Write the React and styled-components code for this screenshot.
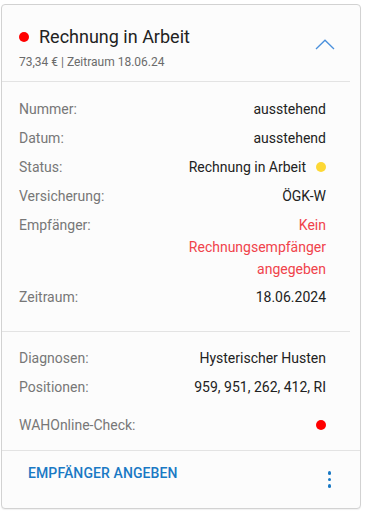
import React from "react";
import styled, { createGlobalStyle } from "styled-components";

const GlobalStyle = createGlobalStyle`
  *, *::before, *::after {
    box-sizing: border-box;
  }
  body {
    margin: 0;
    background: #ffffff;
    font-family: Roboto, "Liberation Sans", Arial, sans-serif;
  }
`;

const Page = styled.div`
  padding: 4px 5px 6px 1px;
`;

const Card = styled.div`
  width: 360px;
  border: 1px solid #d2d2d2;
  border-radius: 4px;
  background: #fcfcfc;
  box-shadow: 0 1px 1px rgba(0, 0, 0, 0.06);
  display: flex;
  flex-direction: column;
`;

const Header = styled.div`
  display: flex;
  align-items: flex-start;
  justify-content: space-between;
  padding: 19px 24px 0 17px;
  height: 77px;
  border-bottom: 1px solid #e3e3e3;
  margin-right: 10px;
`;

const TitleLine = styled.div`
  display: flex;
  align-items: center;
  gap: 10px;
`;

const Dot = styled.span`
  display: inline-block;
  width: ${({ size }) => size || 9}px;
  height: ${({ size }) => size || 9}px;
  border-radius: 50%;
  background: ${({ color }) => color};
  flex-shrink: 0;
`;

const Title = styled.div`
  font-size: 18px;
  line-height: 26px;
  color: #222222;
`;

const Subtitle = styled.div`
  font-size: 12px;
  line-height: 16px;
  color: #6b6b6b;
  margin-top: 4px;
`;

const Chevron = styled.svg`
  margin-top: 15px;
  margin-right: -9px;
`;

const Section = styled.div`
  padding: ${({ pad }) => pad};
  margin-right: 10px;
  border-bottom: ${({ last }) => (last ? "none" : "1px solid #e3e3e3")};
  display: flex;
  flex-direction: column;
`;

const Row = styled.div`
  display: flex;
  justify-content: space-between;
  align-items: ${({ center }) => (center ? "center" : "flex-start")};
  min-height: ${({ h }) => h || 29}px;
  padding-right: 24px;
`;

const Label = styled.div`
  font-size: 14px;
  line-height: 22px;
  color: #777777;
`;

const Value = styled.div`
  font-size: 14px;
  line-height: 22px;
  color: ${({ warn }) => (warn ? "#f0434b" : "#222222")};
  text-align: right;
  display: flex;
  align-items: center;
  gap: 10px;
  max-width: ${({ wide }) => (wide ? "none" : "150px")};
  justify-content: flex-end;
`;

const Footer = styled.div`
  display: flex;
  justify-content: space-between;
  align-items: flex-start;
  border-top: 1px solid #e3e3e3;
  height: 58px;
  padding: 13px 29px 0 26px;
`;

const ActionButton = styled.button`
  border: none;
  background: none;
  padding: 0;
  font-family: inherit;
  font-size: 14px;
  font-weight: 500;
  letter-spacing: 0.1px;
  color: #1a79c4;
  line-height: 18px;
  cursor: pointer;
`;

const Kebab = styled.div`
  display: flex;
  flex-direction: column;
  gap: 3px;
  margin-top: 7px;
`;

const KebabDot = styled.span`
  width: 3.5px;
  height: 3.5px;
  border-radius: 50%;
  background: #1a79c4;
`;

export default function App() {
  return (
    <Page>
      <GlobalStyle />
      <Card>
        <Header>
          <div>
            <TitleLine>
              <Dot color="#ff0000" size={10} />
              <Title>Rechnung in Arbeit</Title>
            </TitleLine>
            <Subtitle>73,34 € | Zeitraum 18.06.24</Subtitle>
          </div>
          <Chevron width="20" height="11" viewBox="0 0 20 11">
            <path d="M1 10 L10 1.2 L19 10" fill="none" stroke="#4a90dc" strokeWidth="1.3" />
          </Chevron>
        </Header>

        <Section pad="16px 0 23px 17px">
          <Row>
            <Label>Nummer:</Label>
            <Value>ausstehend</Value>
          </Row>
          <Row>
            <Label>Datum:</Label>
            <Value>ausstehend</Value>
          </Row>
          <Row>
            <Label>Status:</Label>
            <Value wide>
              Rechnung in Arbeit <Dot color="#fdd835" size={10} />
            </Value>
          </Row>
          <Row>
            <Label>Versicherung:</Label>
            <Value>ÖGK-W</Value>
          </Row>
          <Row h={72}>
            <Label>Empfänger:</Label>
            <Value warn>Kein Rechnungsempfänger angegeben</Value>
          </Row>
          <Row h={22}>
            <Label>Zeitraum:</Label>
            <Value>18.06.2024</Value>
          </Row>
        </Section>

        <Section pad="15px 0 5px 17px" last>
          <Row>
            <Label>Diagnosen:</Label>
            <Value wide>Hysterischer Husten</Value>
          </Row>
          <Row>
            <Label>Positionen:</Label>
            <Value wide>959, 951, 262, 412, RI</Value>
          </Row>
          <Row h={40} center>
            <Label>WAHOnline-Check:</Label>
            <Value>
              <Dot color="#ff0000" size={10} />
            </Value>
          </Row>
        </Section>

        <Footer>
          <ActionButton>EMPFÄNGER ANGEBEN</ActionButton>
          <Kebab>
            <KebabDot />
            <KebabDot />
            <KebabDot />
          </Kebab>
        </Footer>
      </Card>
    </Page>
  );
}
